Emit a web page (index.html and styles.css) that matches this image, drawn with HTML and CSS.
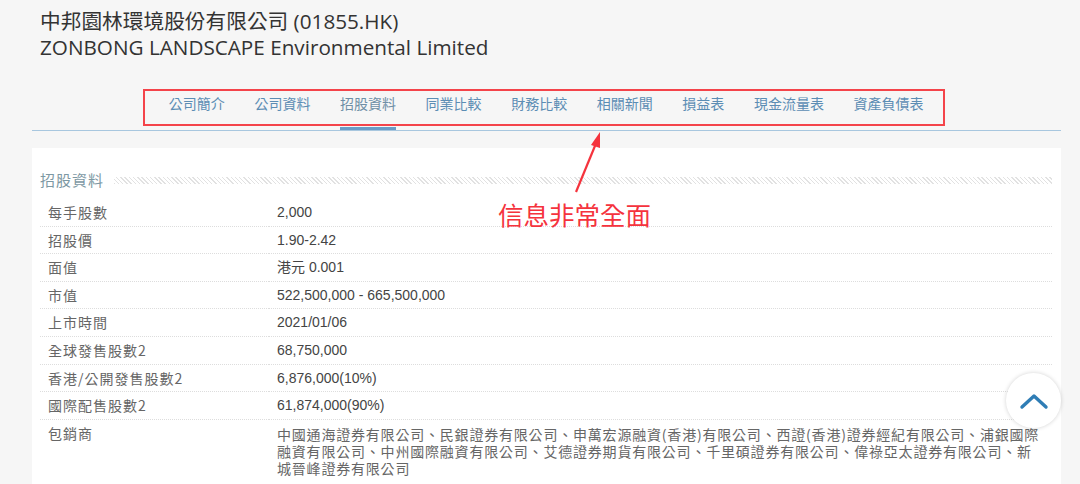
FILE: index.html
```html
<!DOCTYPE html>
<html lang="zh-Hant">
<head>
    <meta charset="UTF-8">
    <title>中邦園林環境股份有限公司 (01855.HK)</title>
    <link rel="stylesheet" href="styles.css">
</head>
<body>
    <div class="page">
        <header class="company">
            <div class="company-name">中邦園林環境股份有限公司 (01855.HK)</div>
            <div class="company-name">ZONBONG LANDSCAPE Environmental Limited</div>
        </header>

        <nav class="tabs">
            <ul>
                <li><a href="#">公司簡介</a></li>
                <li><a href="#">公司資料</a></li>
                <li><a href="#" class="active">招股資料</a></li>
                <li><a href="#">同業比較</a></li>
                <li><a href="#">財務比較</a></li>
                <li><a href="#">相關新聞</a></li>
                <li><a href="#">損益表</a></li>
                <li><a href="#">現金流量表</a></li>
                <li><a href="#">資產負債表</a></li>
            </ul>
            <div class="mark-box"></div>
        </nav>

        <section class="panel">
            <h3 class="panel-title"><span>招股資料</span><i class="hatch"></i></h3>
            <table class="ipo">
                <tr><th>每手股數</th><td>2,000</td></tr>
                <tr><th>招股價</th><td>1.90-2.42</td></tr>
                <tr><th>面值</th><td>港元 0.001</td></tr>
                <tr><th>市值</th><td>522,500,000 - 665,500,000</td></tr>
                <tr><th>上市時間</th><td>2021/01/06</td></tr>
                <tr><th>全球發售股數2</th><td>68,750,000</td></tr>
                <tr><th>香港/公開發售股數2</th><td>6,876,000(10%)</td></tr>
                <tr><th>國際配售股數2</th><td>61,874,000(90%)</td></tr>
                <tr class="long"><th>包銷商</th><td>中國通海證券有限公司、民銀證券有限公司、申萬宏源融資(香港)有限公司、西證(香港)證券經紀有限公司、浦銀國際融資有限公司、中州國際融資有限公司、艾德證券期貨有限公司、千里碩證券有限公司、偉祿亞太證券有限公司、新城晉峰證券有限公司</td></tr>
            </table>
        </section>
    </div>

    <!-- annotation drawn over the screenshot -->
    <svg class="mark-arrow" width="40" height="70" viewBox="0 0 40 70">
        <path d="M8 63 L29 12" stroke="#f5333d" stroke-width="2.2" fill="none"/>
        <path d="M32 3 L23 16 L32 19 Z" fill="#f5333d"/>
    </svg>
    <div class="mark-text">信息非常全面</div>

    <a href="#" class="to-top">
        <svg width="30" height="18" viewBox="0 0 30 18">
            <path d="M3 15 L15 4 L27 15" stroke="#2f7db5" stroke-width="3.4" fill="none" stroke-linecap="round" stroke-linejoin="round"/>
        </svg>
    </a>
</body>
</html>
```

FILE: styles.css
```css
body {
    margin: 0;
    background: #f6f6f6;
    font-family: "Liberation Sans", "Noto Sans CJK TC", sans-serif;
    color: #444;
}

.page {
    margin-left: 32px;
    width: 1029px;
}

.company {
    padding: 8px 0 0 8px;
}

.company-name {
    font-family: "Open Sans", "Noto Sans CJK TC", sans-serif;
    font-size: 20.7px;
    line-height: 26px;
    color: #333;
}

.tabs {
    margin-top: 29px;
    border-bottom: 1px solid #a8c7df;
    position: relative;
}

    .tabs ul {
        list-style: none;
        margin: 0;
        padding: 0 0 0 122px;
        display: flex;
    }

    .tabs a {
        display: block;
        box-sizing: border-box;
        height: 41px;
        margin: 0 14.8px;
        padding-top: 4px;
        line-height: 20px;
        font-size: 14px;
        color: #5c8db4;
        text-decoration: none;
        font-family: "Noto Sans CJK TC", sans-serif;
    }

    .tabs a.active {
        color: #6f8fa6;
        border-bottom: 3px solid #6a9cc6;
    }

.mark-box {
    position: absolute;
    left: 111px;
    top: 0;
    width: 798px;
    height: 33px;
    border: 2px solid #f4444a;
}

.panel {
    margin-top: 17px;
    background: #fff;
    padding: 22px 9px 12px 8px;
}

.panel-title {
    display: flex;
    align-items: center;
    gap: 10px;
    margin: 0 0 9px;
    font-weight: normal;
    font-size: 15px;
    line-height: 20px;
    letter-spacing: 1px;
    color: #7d98a3;
    font-family: "Noto Sans CJK TC", sans-serif;
}

.hatch {
    flex: 1;
    height: 7px;
    background: repeating-linear-gradient(45deg, #e2e2e2 0 1px, #fff 1px 3px);
}

.ipo {
    width: 100%;
    border-collapse: collapse;
    font-size: 14px;
}

    .ipo th, .ipo td {
        text-align: left;
        vertical-align: top;
        font-weight: normal;
        padding: 4px 8px 3px;
        line-height: 19.6px;
        border-bottom: 1px dotted #ddd;
    }

    .ipo th {
        width: 213px;
        color: #666;
        letter-spacing: 1px;
        font-family: "Noto Sans CJK TC", sans-serif;
    }

    .ipo td {
        color: #444;
    }

    .ipo .long td {
        line-height: 17px;
        padding: 6px 10px 0 8px;
        letter-spacing: 0.8px;
        color: #666;
        font-family: "Noto Sans CJK TC", sans-serif;
        border-bottom: none;
    }

    .ipo .long th {
        border-bottom: none;
        line-height: 17px;
        padding-top: 5px;
    }

.mark-arrow {
    position: absolute;
    left: 568px;
    top: 129px;
}

.mark-text {
    position: absolute;
    left: 498px;
    top: 198px;
    font-family: "Noto Sans CJK SC", sans-serif;
    font-size: 25.5px;
    line-height: 32px;
    color: #f5333d;
}

.to-top {
    position: absolute;
    left: 1006px;
    top: 373px;
    width: 55px;
    height: 55px;
    border-radius: 50%;
    background: #fff;
    box-shadow: 0 0 4px rgba(0, 0, 0, 0.18);
    display: flex;
    align-items: center;
    justify-content: center;
}
```
